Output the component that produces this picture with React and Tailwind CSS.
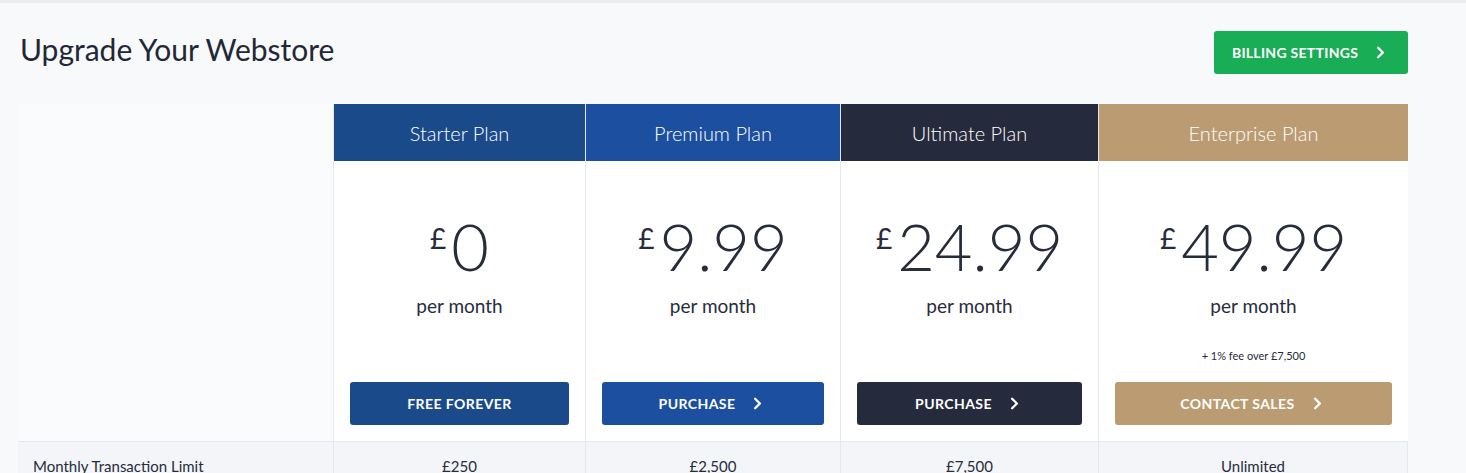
import { ChevronRight } from "lucide-react"

const plans = [
  { name: "Starter Plan", price: "0", head: "bg-[#1b4a8a]", btn: "bg-[#1b4a8a]", label: "FREE FOREVER", arrow: false, limit: "£250" },
  { name: "Premium Plan", price: "9.99", head: "bg-[#1c4f9f]", btn: "bg-[#1c4f9f]", label: "PURCHASE", arrow: true, limit: "£2,500" },
  { name: "Ultimate Plan", price: "24.99", head: "bg-[#262a3d]", btn: "bg-[#262a3d]", label: "PURCHASE", arrow: true, limit: "£7,500" },
  { name: "Enterprise Plan", price: "49.99", head: "bg-[#bb9b72]", btn: "bg-[#bb9b72]", label: "CONTACT SALES", arrow: true, limit: "Unlimited", fee: "+ 1% fee over £7,500" },
]

function PlanButton({ plan }) {
  return (
    <button className={`${plan.btn} h-[43px] w-full rounded-[3px] text-white text-[14px] font-bold tracking-[0.03em] flex items-center justify-center gap-[13px]`}>
      <span>{plan.label}</span>
      {plan.arrow && <ChevronRight size={19} strokeWidth={3} />}
    </button>
  )
}

export default function App() {
  return (
    <div className="min-h-[473px] bg-[#f8f9fb] text-[#272c3b]" style={{ fontFamily: "Lato, 'Noto Sans', sans-serif" }}>
      <div className="h-[3px] bg-[#eaecef]" />

      <div className="px-5 pt-[28px]">
        {/* Header */}
        <div className="flex items-start justify-between w-[1388px]">
          <h1 className="text-[30px] leading-[1.2] font-normal text-[#222736]">Upgrade Your Webstore</h1>
          <button className="h-[43px] w-[194px] rounded-[3px] bg-[#19ad55] text-white text-[14px] font-bold tracking-[0.02em] flex items-center justify-center gap-[13px]">
            <span>BILLING SETTINGS</span>
            <ChevronRight size={19} strokeWidth={3} />
          </button>
        </div>

        {/* Plans table */}
        <div className="mt-[30px] -ml-[2px] grid grid-cols-[315px_252px_255px_258px_310px]">
          <div className="bg-[#fafbfc]" />
          {plans.map((p) => (
            <div key={p.name} className={`${p.head} h-[57px] flex items-center justify-center text-white text-[20px] font-light border-l border-[#e3e8ef]`}>
              {p.name}
            </div>
          ))}

          <div className="bg-[#fafbfc] border-b border-[#e3e8ef]" />
          {plans.map((p) => (
            <div key={p.name} className="bg-white border-l border-b border-[#e3e8ef] last:border-r px-4 pb-4 pt-[53px] flex flex-col items-center">
              <div className="flex items-start">
                <span className="text-[28px] leading-none mt-[10px] mr-[5px]">£</span>
                <span className="text-[65px] leading-none font-light">{p.price}</span>
              </div>
              <div className="mt-[15px] text-[19px] leading-[24px]">per month</div>
              <div className="h-[26px] mt-[25px] text-[11px] leading-[26px]">{p.fee}</div>
              <div className="mt-auto w-full pt-[13px]">
                <PlanButton plan={p} />
              </div>
            </div>
          ))}

          <div className="bg-[#f3f5f9] pl-[15px] pt-[13px] pb-3 text-[15px]">Monthly Transaction Limit</div>
          {plans.map((p) => (
            <div key={p.name} className="bg-[#f3f5f9] border-l border-[#e3e8ef] last:border-r pt-[13px] pb-3 text-center text-[15px]">
              {p.limit}
            </div>
          ))}
        </div>
      </div>
    </div>
  )
}
